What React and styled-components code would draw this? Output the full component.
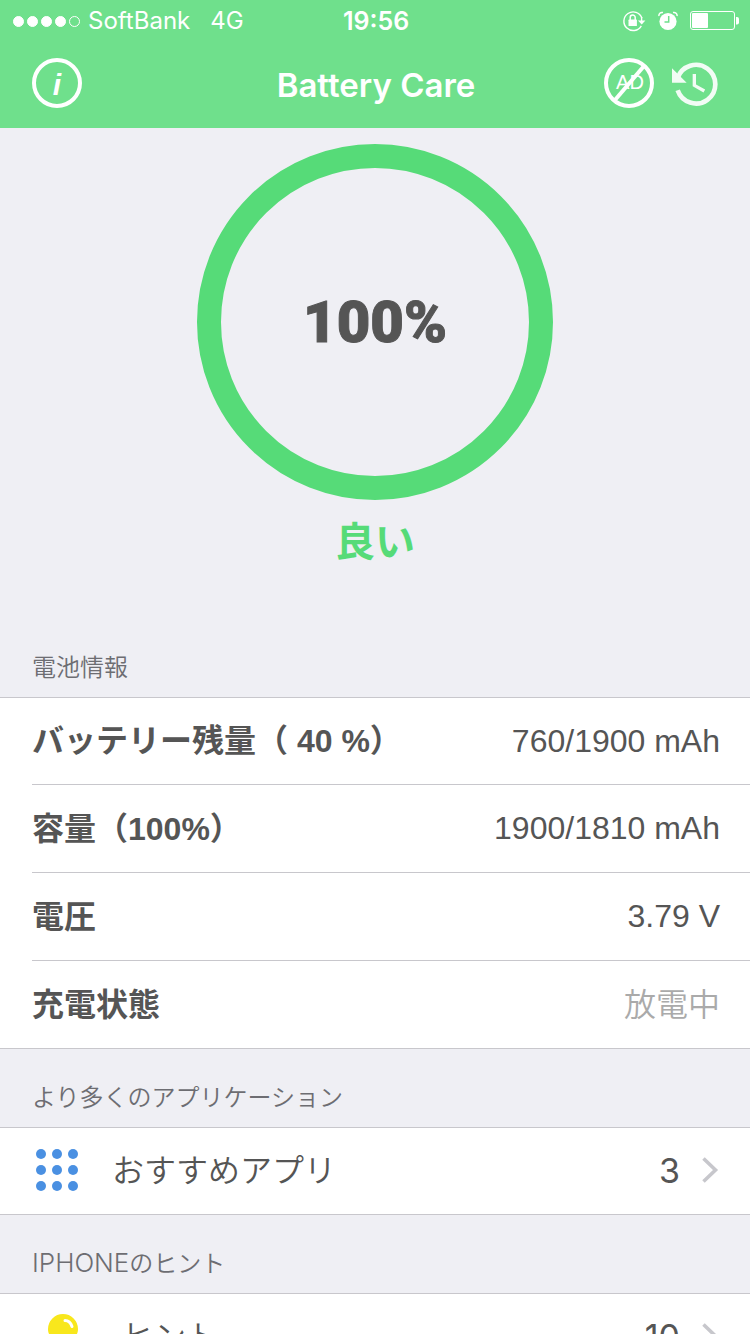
import React from 'react';
import styled, { createGlobalStyle } from 'styled-components';

const GlobalStyle = createGlobalStyle`
  * {
    box-sizing: border-box;
  }

  body {
    margin: 0;
    background: #efeff4;
    color: #555;
    font-family: Inter, "Noto Sans CJK JP", sans-serif;
  }
`;

const Screen = styled.div`
  display: flex;
  flex-direction: column;
  height: 100vh;
`;

const Header = styled.header`
  flex: none;
  background: #6fe08c;
  color: #fff;
`;

const StatusBar = styled.div`
  display: grid;
  grid-template-columns: 1fr auto 1fr;
  align-items: center;
  height: 40px;
  padding: 1px 11px 0 13px;
  font-size: 24px;
  line-height: 40px;
`;

const Carrier = styled.div`
  display: flex;
  align-items: center;
  gap: 8px;
`;

const Signal = styled.div`
  display: flex;
  gap: 3px;
`;

const SignalDot = styled.span`
  width: 11px;
  height: 11px;
  border: 1px solid #fff;
  border-radius: 50%;
  background: ${({ $on }) => ($on ? '#fff' : 'transparent')};
`;

const Network = styled.span`
  margin-left: 12px;
`;

const Clock = styled.time`
  font-size: 25px;
  font-weight: 600;
`;

const StatusIcons = styled.div`
  display: flex;
  justify-content: flex-end;
  align-items: center;
  gap: 12px;
`;

const NavBar = styled.nav`
  display: grid;
  grid-template-columns: 1fr auto 1fr;
  align-items: center;
  height: 88px;
  padding: 0 30px 2px 32px;
`;

const NavTitle = styled.h1`
  margin: 0;
  padding-top: 4px;
  font-size: 33px;
  font-weight: 600;
  line-height: 40px;
`;

const NavActions = styled.div`
  display: flex;
  justify-content: ${({ $end }) => ($end ? 'flex-end' : 'flex-start')};
  gap: 16px;
`;

const IconButton = styled.button`
  display: block;
  width: 50px;
  height: 50px;
  padding: 0;
  border: 0;
  background: none;
  color: inherit;

  svg {
    display: block;
  }
`;

const Content = styled.main`
  flex: 1;
  min-height: 0;
  overflow-y: auto;
  scrollbar-width: none;
`;

const Health = styled.section`
  display: flex;
  flex-direction: column;
  align-items: center;
  gap: 14px;
  padding: 16px 0 49px;
`;

const Ring = styled.div`
  display: flex;
  align-items: center;
  justify-content: center;
  width: 356px;
  height: 356px;
  border: 24px solid #56db78;
  border-radius: 50%;
  font-family: Roboto, sans-serif;
  font-size: 58px;
  font-weight: 900;
  -webkit-text-stroke: 1px #555;
`;

const HealthLabel = styled.p`
  margin: 0;
  color: #56db78;
  font-size: 40px;
  font-weight: 600;
  line-height: 56px;
`;

const SectionTitle = styled.h2`
  margin: 0;
  padding: 33px 32px 13px;
  color: #6d6d72;
  font-size: 24px;
  font-weight: 350;
  line-height: 32px;
`;

const Latin = styled.span`
  font-size: 26px;
  line-height: 1;
`;

const Group = styled.div`
  margin: 0;
  padding-left: 32px;
  border: solid #c8c7cc;
  border-width: 1px 0;
  background: #fff;
`;

const InfoRow = styled.div`
  display: flex;
  align-items: center;
  justify-content: space-between;
  height: 88px;
  padding-right: 30px;
  border-top: 1px solid #c8c7cc;
  font-family: "Liberation Sans", "Noto Sans CJK JP", sans-serif;
  font-size: 32px;

  &:first-child {
    height: 86px;
    border-top: 0;
  }
`;

const InfoName = styled.dt`
  padding-bottom: 6px;
  font-weight: 700;
`;

const InfoValue = styled.dd`
  margin: 0;
  padding-bottom: ${({ $muted }) => ($muted ? 6 : 0)}px;
  color: ${({ $muted }) => ($muted ? '#aaa' : '#555')};
  font-weight: ${({ $muted }) => ($muted ? 350 : 400)};
`;

const LinkRow = styled.a`
  display: flex;
  align-items: center;
  height: 86px;
  padding: 0 30px 2px 0;
  color: inherit;
  text-decoration: none;
`;

const LinkIcon = styled.span`
  display: flex;
  width: ${({ $width }) => $width}px;
  margin-right: 30px;
`;

const LinkText = styled.span`
  flex: 1;
  padding-bottom: 4px;
  font-size: 32px;
  font-weight: 350;
`;

const LinkCount = styled.span`
  margin-right: 20px;
  font-size: 34px;
`;

const RotationLockIcon = () => (
  <svg width="24" height="22" viewBox="0 0 24 22" aria-hidden="true">
    <path d="M19.3 15.8A9.3 9.3 0 1 1 19.9 8" fill="none" stroke="#fff" strokeWidth="1.4" />
    <path d="M19.6 7v4" stroke="#fff" strokeWidth="1.4" />
    <path d="M16 10.5h7.4l-3.7 4z" fill="#fff" />
    <rect x="6.5" y="9.6" width="8.4" height="6.4" rx="0.6" fill="#fff" />
    <path d="M8.2 10V7.6a2.5 2.5 0 0 1 5 0V10" fill="none" stroke="#fff" strokeWidth="1.5" />
  </svg>
);

const AlarmIcon = () => (
  <svg width="20" height="20" viewBox="0 0 20 20" aria-hidden="true">
    <circle cx="10" cy="10.5" r="8.6" fill="#fff" />
    <path d="M1 5C.6 2.800 2.400 1 5 1.600M19 5C19.400 2.800 17.600 1 15 1.600" fill="none" stroke="#fff" strokeWidth="1.500" />
    <path d="M10.700 5v6H6.500" fill="none" stroke="#6fe08c" strokeWidth="1.500" />
  </svg>
);

const BatteryIcon = () => (
  <svg width="49" height="20" viewBox="0 0 49 20" aria-hidden="true">
    <rect x="0.5" y="0.5" width="44" height="18" rx="2.5" fill="none" stroke="#fff" />
    <rect x="2" y="2" width="16" height="15" rx="1" fill="#fff" />
    <path d="M46 6h1a2 2 0 0 1 2 2v3.500a2 2 0 0 1-2 2h-1z" fill="#fff" />
  </svg>
);

const InfoIcon = () => (
  <svg width="50" height="50" viewBox="0 0 50 50" aria-hidden="true">
    <circle cx="25" cy="25" r="23" fill="none" stroke="#fff" strokeWidth="4" />
    <text x="25" y="37" fill="#fff" textAnchor="middle" fontFamily="Liberation Sans, sans-serif" fontSize="30" fontWeight="700" fontStyle="italic">i</text>
  </svg>
);

const NoAdsIcon = () => (
  <svg width="50" height="50" viewBox="0 0 50 50" aria-hidden="true">
    <circle cx="25" cy="25" r="23" fill="none" stroke="#fff" strokeWidth="4" />
    <text x="26" y="31" fill="#fff" textAnchor="middle" fontFamily="Liberation Sans, sans-serif" fontSize="20">AD</text>
    <path d="M11 42L40 8" stroke="#fff" strokeWidth="4" />
  </svg>
);

const HistoryIcon = () => (
  <svg width="50" height="50" viewBox="0 0 150 150" aria-hidden="true">
    <g fill="#f2fcf5" stroke="none">
      <path d="M23 60A58 58 0 1 1 23 97" fill="none" stroke="#f2fcf5" strokeWidth="14" />
      <path d="M6 31v43h44z" />
      <path d="M73 48v34l30 17" fill="none" stroke="#f2fcf5" strokeWidth="10" />
    </g>
  </svg>
);

const GridIcon = () => (
  <svg width="50" height="50" viewBox="0 0 50 50" aria-hidden="true">
    {[9, 25, 41].map((y) =>
      [9, 25, 41].map((x) => <circle key={`${x}-${y}`} cx={x} cy={y} r="5" fill="#4a90e2" />)
    )}
  </svg>
);

const BulbIcon = () => (
  <svg width="60" height="50" viewBox="0 0 60 50" aria-hidden="true">
    <path d="M31 3a15 15 0 0 1 15 15c0 8-7 10-7 17H23c0-7-7-9-7-17A15 15 0 0 1 31 3z" fill="#f8e71c" />
    <path d="M33 9.500c4 0 6 3 7 6" fill="none" stroke="#fff" strokeWidth="3" strokeLinecap="round" />
    <path d="M24 39h14M26 44h10" stroke="#9b9b9b" strokeWidth="3" strokeLinecap="round" />
  </svg>
);

const Chevron = () => (
  <svg width="20" height="28" viewBox="0 0 20 28" aria-hidden="true">
    <path d="M3.500 2.500L15.500 14L3.500 25.500" fill="none" stroke="#c7c7cc" strokeWidth="3.600" />
  </svg>
);

const batteryInfo = [
  { name: 'バッテリー残量（ 40 %）', value: '760/1900 mAh' },
  { name: '容量（100%）', value: '1900/1810 mAh' },
  { name: '電圧', value: '3.79 V' },
  { name: '充電状態', value: '放電中', muted: true },
];

const App = () => (
  <Screen>
    <GlobalStyle />
    <Header>
      <StatusBar>
        <Carrier>
          <Signal>
            {[1, 2, 3, 4, 5].map((n) => <SignalDot key={n} $on={n < 5} />)}
          </Signal>
          <span>SoftBank</span>
          <Network>4G</Network>
        </Carrier>
        <Clock>19:56</Clock>
        <StatusIcons>
          <RotationLockIcon />
          <AlarmIcon />
          <BatteryIcon />
        </StatusIcons>
      </StatusBar>
      <NavBar>
        <NavActions>
          <IconButton type="button" aria-label="Info"><InfoIcon /></IconButton>
        </NavActions>
        <NavTitle>Battery Care</NavTitle>
        <NavActions $end>
          <IconButton type="button" aria-label="Remove ads"><NoAdsIcon /></IconButton>
          <IconButton type="button" aria-label="History"><HistoryIcon /></IconButton>
        </NavActions>
      </NavBar>
    </Header>

    <Content>
      <Health>
        <Ring>100%</Ring>
        <HealthLabel>良い</HealthLabel>
      </Health>

      <SectionTitle>電池情報</SectionTitle>
      <Group as="dl">
        {batteryInfo.map((item) => (
          <InfoRow key={item.name}>
            <InfoName>{item.name}</InfoName>
            <InfoValue $muted={item.muted}>{item.value}</InfoValue>
          </InfoRow>
        ))}
      </Group>

      <SectionTitle>より多くのアプリケーション</SectionTitle>
      <Group>
        <LinkRow href="#apps">
          <LinkIcon $width={50}><GridIcon /></LinkIcon>
          <LinkText>おすすめアプリ</LinkText>
          <LinkCount>3</LinkCount>
          <Chevron />
        </LinkRow>
      </Group>

      <SectionTitle><Latin>IPHONE</Latin>のヒント</SectionTitle>
      <Group>
        <LinkRow href="#tips">
          <LinkIcon $width={60}><BulbIcon /></LinkIcon>
          <LinkText>ヒント</LinkText>
          <LinkCount>10</LinkCount>
          <Chevron />
        </LinkRow>
      </Group>
    </Content>
  </Screen>
);

export default App;
